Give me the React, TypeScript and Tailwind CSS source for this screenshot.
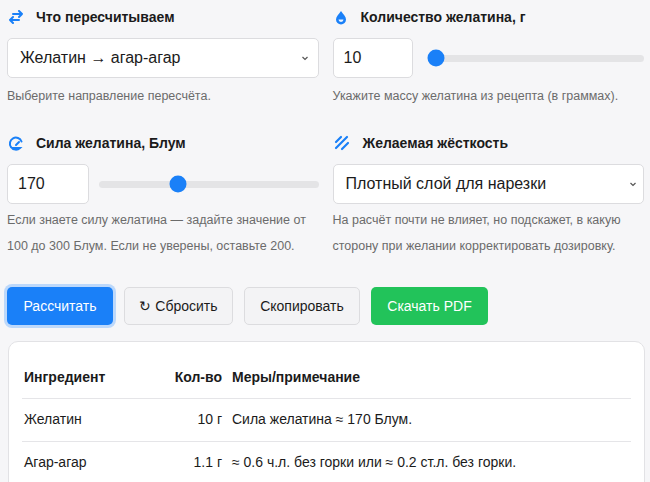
import React from "react";

const Slider = ({ pct }: { pct: number }) => (
  <div className="relative flex-1 h-[7px] rounded-full bg-[#e4e4e6]">
    <div className="absolute top-1/2 -translate-y-1/2 -translate-x-1/2 w-[17px] h-[17px] rounded-full bg-[#1a80f8]" style={{ left: `${pct}%` }} />
  </div>
);

const Chevron = () => (
  <svg width="10" height="10" viewBox="0 0 10 10" className="text-[#555]"><path d="M2.5 4l2.5 2.5L7.5 4" fill="none" stroke="currentColor" strokeWidth="1.2" /></svg>
);

export default function App() {
  return (
    <div className="w-[650px] h-[482px] overflow-hidden bg-[#f6f6f8] text-[#1b1b1b]" style={{ fontFamily: '"Liberation Sans", Arial, sans-serif' }}>
      <div className="grid grid-cols-2 gap-x-[14px] pl-[7px] pr-[6px] pt-[7px]">
        <div>
          <div className="flex items-center gap-[12px] h-[20px] pl-[1px]">
            <svg width="16" height="14" viewBox="0 0 16 14" fill="none" stroke="#1a80f8" strokeWidth="2" strokeLinecap="round" strokeLinejoin="round"><path d="M2 10h9M5 7l-3 3 3 3" /><path d="M14 4H5M11 1l3 3-3 3" /></svg>
            <span className="font-bold text-[14px]">Что пересчитываем</span>
          </div>
          <div className="mt-[11px] h-[40px] bg-white border border-[#dcdcdf] rounded-[5px] flex items-center justify-between pl-[12px] pr-[8px] text-[16px]">
            <span>Желатин → агар-агар</span><Chevron />
          </div>
          <p className="mt-[5px] text-[12.5px] text-[#6b6b6b] leading-[26px]">Выберите направление пересчёта.</p>
        </div>
        <div>
          <div className="flex items-center gap-[13px] h-[20px] pl-[1px]">
            <svg width="14" height="15" viewBox="0 0 14 15"><path d="M7 1C5 4 2 6.5 2 9.5a5 5 0 0 0 10 0C12 6.5 9 4 7 1z" fill="#1a80f8" /><path d="M4.5 9.5a2.5 2.5 0 0 0 5 0z" fill="white" opacity="0.9" /></svg>
            <span className="font-bold text-[14px]">Количество желатина, г</span>
          </div>
          <div className="mt-[11px] flex items-center gap-[15px]">
            <div className="w-[80px] h-[40px] bg-white border border-[#dcdcdf] rounded-[5px] flex items-center pl-[10px] text-[16px]">10</div>
            <Slider pct={4} />
          </div>
          <p className="mt-[5px] text-[12.5px] text-[#6b6b6b] leading-[26px]">Укажите массу желатина из рецепта (в граммах).</p>
        </div>
        <div className="mt-[24px]">
          <div className="flex items-center gap-[12px] h-[20px] pl-[1px]">
            <svg width="16" height="16" viewBox="0 0 16 16" fill="none" stroke="#1a80f8" strokeWidth="2" strokeLinecap="round"><path d="M13.5 6.5A6 6 0 1 0 12 13H4" /><path d="M8 10l3-3" /></svg>
            <span className="font-bold text-[14px]">Сила желатина, Блум</span>
          </div>
          <div className="mt-[11px] flex items-center gap-[10px]">
            <div className="w-[82px] h-[40px] bg-white border border-[#dcdcdf] rounded-[5px] flex items-center pl-[10px] text-[16px]">170</div>
            <Slider pct={36} />
          </div>
          <p className="mt-[3px] text-[12.5px] text-[#6b6b6b] leading-[26px]">Если знаете силу желатина — задайте значение от 100 до 300 Блум. Если не уверены, оставьте 200.</p>
        </div>
        <div className="mt-[24px]">
          <div className="flex items-center gap-[13px] h-[20px] pl-[1px]">
            <svg width="16" height="16" viewBox="0 0 16 16" fill="none" stroke="#1a80f8" strokeWidth="2.2" strokeLinecap="round"><path d="M2 7l5-5M2 13l11-11M8 14l6-6" /></svg>
            <span className="font-bold text-[14px]">Желаемая жёсткость</span>
          </div>
          <div className="mt-[11px] h-[40px] bg-white border border-[#dcdcdf] rounded-[5px] flex items-center justify-between pl-[12px] pr-[5px] text-[16px]">
            <span>Плотный слой для нарезки</span><Chevron />
          </div>
          <p className="mt-[3px] text-[12.5px] text-[#6b6b6b] leading-[26px]">На расчёт почти не влияет, но подскажет, в какую сторону при желании корректировать дозировку.</p>
        </div>
      </div>
      <div className="flex gap-[11px] pl-[7px] mt-[28px] text-[14px]">
        <button className="h-[38px] w-[106px] rounded-[5px] bg-[#1a80f8] text-white shadow-[0_0_0_3px_#bcd8fb]">Рассчитать</button>
        <button className="h-[38px] w-[109px] rounded-[5px] bg-[#f3f3f5] border border-[#dcdcdf]">↻ Сбросить</button>
        <button className="h-[38px] w-[116px] rounded-[5px] bg-[#f3f3f5] border border-[#dcdcdf]">Скопировать</button>
        <button className="h-[38px] w-[117px] rounded-[5px] bg-[#22c35a] text-white">Скачать PDF</button>
      </div>
      <div className="mt-[16px] ml-[8px] mr-[5px] bg-white border border-[#e2e2e5] rounded-[10px] px-[13px] pt-[15px] pb-4">
        <table className="w-full text-[14px] border-collapse">
          <thead>
            <tr className="border-b border-[#e5e5e8] h-[41px]">
              <th className="text-left font-bold pl-[2px] w-[110px]">Ингредиент</th>
              <th className="text-right font-bold w-[90px]">Кол-во</th>
              <th className="text-left font-bold pl-[10px]">Меры/примечание</th>
            </tr>
          </thead>
          <tbody>
            <tr className="border-b border-[#e5e5e8] h-[43px]">
              <td className="pl-[2px]">Желатин</td><td className="text-right">10 г</td><td className="pl-[10px]">Сила желатина ≈ 170 Блум.</td>
            </tr>
            <tr className="border-b border-[#e5e5e8] h-[43px]">
              <td className="pl-[2px]">Агар-агар</td><td className="text-right">1.1 г</td><td className="pl-[10px]">≈ 0.6 ч.л. без горки или ≈ 0.2 ст.л. без горки.</td>
            </tr>
          </tbody>
        </table>
      </div>
    </div>
  );
}
